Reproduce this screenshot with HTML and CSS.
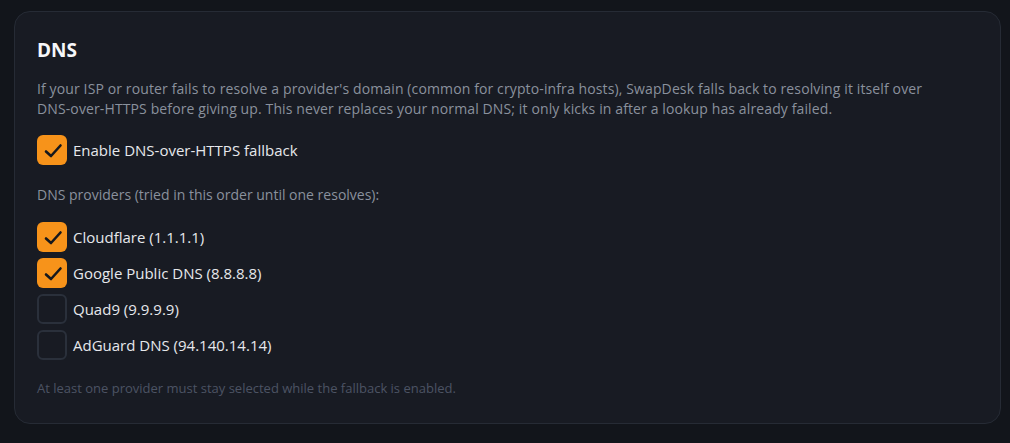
FILE: index.html
```html
<!DOCTYPE html>
<html lang="en">
<head>
<meta charset="utf-8">
<title>DNS</title>
<link rel="stylesheet" href="styles.css">
</head>
<body>
<div class="page">
  <section class="card">
    <h2 class="title">DNS</h2>
    <p class="desc">If your ISP or router fails to resolve a provider's domain (common for crypto-infra hosts), SwapDesk falls back to resolving it itself over <span class="nowrap">DNS-over-HTTPS</span> before giving up. This never replaces your normal DNS; it only kicks in after a lookup has already failed.</p>
    <label class="row main-toggle">
      <span class="box checked"><svg viewBox="0 0 30 30" width="30" height="30"><path d="M9 16.5 L14 21 L23.5 10.5" fill="none" stroke="#16181d" stroke-width="2.6" stroke-linecap="round" stroke-linejoin="round"/></svg></span>
      <span class="label">Enable DNS-over-HTTPS fallback</span>
    </label>
    <div class="sub">DNS providers (tried in this order until one resolves):</div>
    <div class="list">
      <label class="row">
        <span class="box checked"><svg viewBox="0 0 30 30" width="30" height="30"><path d="M9 16.5 L14 21 L23.5 10.5" fill="none" stroke="#16181d" stroke-width="2.6" stroke-linecap="round" stroke-linejoin="round"/></svg></span>
        <span class="label">Cloudflare (1.1.1.1)</span>
      </label>
      <label class="row">
        <span class="box checked"><svg viewBox="0 0 30 30" width="30" height="30"><path d="M9 16.5 L14 21 L23.5 10.5" fill="none" stroke="#16181d" stroke-width="2.6" stroke-linecap="round" stroke-linejoin="round"/></svg></span>
        <span class="label">Google Public DNS (8.8.8.8)</span>
      </label>
      <label class="row">
        <span class="box"></span>
        <span class="label">Quad9 (9.9.9.9)</span>
      </label>
      <label class="row">
        <span class="box"></span>
        <span class="label">AdGuard DNS (94.140.14.14)</span>
      </label>
    </div>
    <p class="note">At least one provider must stay selected while the fallback is enabled.</p>
  </section>
</div>
</body>
</html>
```

FILE: styles.css
```css
* { box-sizing: border-box; }
html, body { margin: 0; padding: 0; }
body {
  background: #12151b;
  font-family: "Open Sans", "Noto Sans", sans-serif;
  color: #e6e8ec;
}
.page {
  padding: 11px 9px 19px 14px;
}
.card {
  background: #181b23;
  border: 1px solid #262b35;
  border-radius: 16px;
  padding: 26px 22px 26px 22px;
}
.title {
  margin: 0;
  font-size: 19px;
  line-height: 24px;
  font-weight: 700;
  color: #f6f7f9;
}
.desc {
  margin: 17px 0 0;
  font-size: 14px;
  line-height: 20px;
  letter-spacing: 0.12px;
  color: #8a919d;
}
.nowrap {
  white-space: nowrap;
}
.row {
  display: flex;
  align-items: center;
  gap: 6px;
  height: 30px;
  font-size: 15px;
  color: #e6e8ec;
}
.main-toggle {
  margin-top: 16px;
}
.box {
  flex: none;
  width: 30px;
  height: 30px;
  border-radius: 6px;
  border: 2px solid #2a303b;
  display: flex;
  align-items: center;
  justify-content: center;
}
.box.checked {
  background: #f7931a;
  border: none;
}
.sub {
  margin-top: 20px;
  font-size: 14px;
  line-height: 20px;
  color: #8a919d;
}
.list {
  margin-top: 17px;
  display: flex;
  flex-direction: column;
  gap: 6px;
}
.note {
  margin: 19px 0 0;
  font-size: 13px;
  line-height: 18px;
  color: #4c5363;
}
```
